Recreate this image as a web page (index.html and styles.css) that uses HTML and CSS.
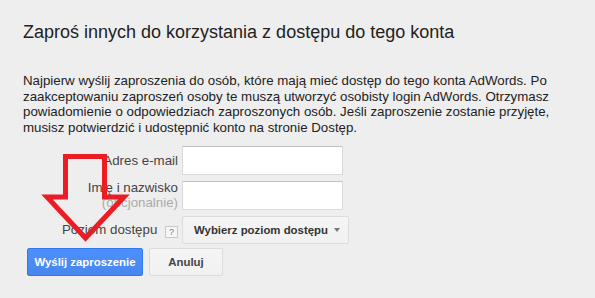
FILE: index.html
```html
<!DOCTYPE html>
<html lang="pl">
<head>
  <meta charset="UTF-8" />
  <title>Zaproś innych</title>
  <link rel="stylesheet" href="styles.css">
</head>
<body>
  <div class="page">
    <h1>Zaproś innych do korzystania z dostępu do tego konta</h1>
    <p class="intro">Najpierw wyślij zaproszenia do osób, które mają mieć dostęp do tego konta AdWords. Po zaakceptowaniu zaproszeń osoby te muszą utworzyć osobisty login AdWords. Otrzymasz powiadomienie o odpowiedziach zaproszonych osób. Jeśli zaproszenie zostanie przyjęte, musisz potwierdzić i udostępnić konto na stronie Dostęp.</p>

    <form class="invite">
      <div class="row row-email">
        <label class="label">Adres e-mail</label>
        <input type="text" class="field" />
      </div>
      <div class="row row-name">
        <label class="label">Imię i nazwisko<span class="hint">(opcjonalnie)</span></label>
        <input type="text" class="field" />
      </div>
      <div class="row row-level">
        <label class="label">Poziom dostępu <span class="help">?</span></label>
        <button type="button" class="select">Wybierz poziom dostępu <span class="caret"></span></button>
      </div>
      <div class="actions">
        <button type="submit" class="btn btn-primary">Wyślij zaproszenie</button>
        <button type="button" class="btn">Anuluj</button>
      </div>
    </form>
  </div>

  <svg class="arrow" width="92" height="96" viewBox="0 0 92 96">
    <path d="M25.5 6.5 H64.5 V47 H84 L45.5 88 L7 47 H25.5 Z" fill="none" stroke="#ec1c24" stroke-width="5" stroke-linejoin="miter" />
  </svg>
</body>
</html>
```

FILE: styles.css
```css
body {
  margin: 0;
  background: #eeeeee;
  font-family: 'Liberation Sans', Arial, sans-serif;
  color: #333;
  position: relative;
  height: 298px;
  overflow: hidden;
}
.page {
  padding: 20px 16px 0 23px;
}
h1 {
  font-size: 18px;
  font-weight: normal;
  color: #222;
  margin: 0;
  line-height: 24px;
}
.intro {
  font-size: 13.3px;
  line-height: 15.5px;
  color: #222;
  margin: 29px 0 0;
}
.invite {
  margin-top: 11px;
}
.row {
  display: flex;
  align-items: center;
}
.row-email { margin-bottom: 5px; }
.row-name { margin-bottom: 6px; }
.row-level { margin-bottom: 4px; }
.label {
  width: 159px;
  padding-right: 4px;
  box-sizing: border-box;
  text-align: right;
  font-size: 13.3px;
  line-height: 15px;
  color: #444;
}
.hint {
  display: block;
  color: #aaa;
}
.help {
  display: inline-block;
  width: 11px;
  height: 10px;
  line-height: 10px;
  margin-left: 4px;
  border: 1px solid #c8c8c8;
  background: #f6f6f6;
  color: #777;
  font-size: 9px;
  text-align: center;
  vertical-align: -1px;
}
.field {
  width: 161px;
  height: 29px;
  box-sizing: border-box;
  margin: 0;
  border: 1px solid #d9d9d9;
  border-top-color: #c0c0c0;
  background: #fff;
  border-radius: 1px;
}
.select, .btn {
  font-family: 'Liberation Sans', Arial, sans-serif;
  font-size: 11.4px;
  font-weight: bold;
  height: 28px;
  border-radius: 2px;
  white-space: nowrap;
  cursor: pointer;
}
.select {
  width: 167px;
  padding: 0 0 0 11px;
  text-align: left;
  color: #333;
  background: linear-gradient(#f5f5f5, #f1f1f1);
  border: 1px solid #dcdcdc;
}
.caret {
  display: inline-block;
  margin-left: 3px;
  border-left: 3.5px solid transparent;
  border-right: 3.5px solid transparent;
  border-top: 4px solid #777;
  vertical-align: 2px;
}
.actions {
  display: flex;
  gap: 6px;
  margin-left: 4px;
}
.btn {
  width: 74px;
  padding: 0;
  color: #444;
  background: linear-gradient(#f5f5f5, #f1f1f1);
  border: 1px solid #dcdcdc;
}
.btn-primary {
  width: 116px;
  color: #fff;
  background: linear-gradient(#4d90fe, #4787ed);
  border: 1px solid #3079ed;
}
.arrow {
  position: absolute;
  left: 40px;
  top: 150px;
}
```
